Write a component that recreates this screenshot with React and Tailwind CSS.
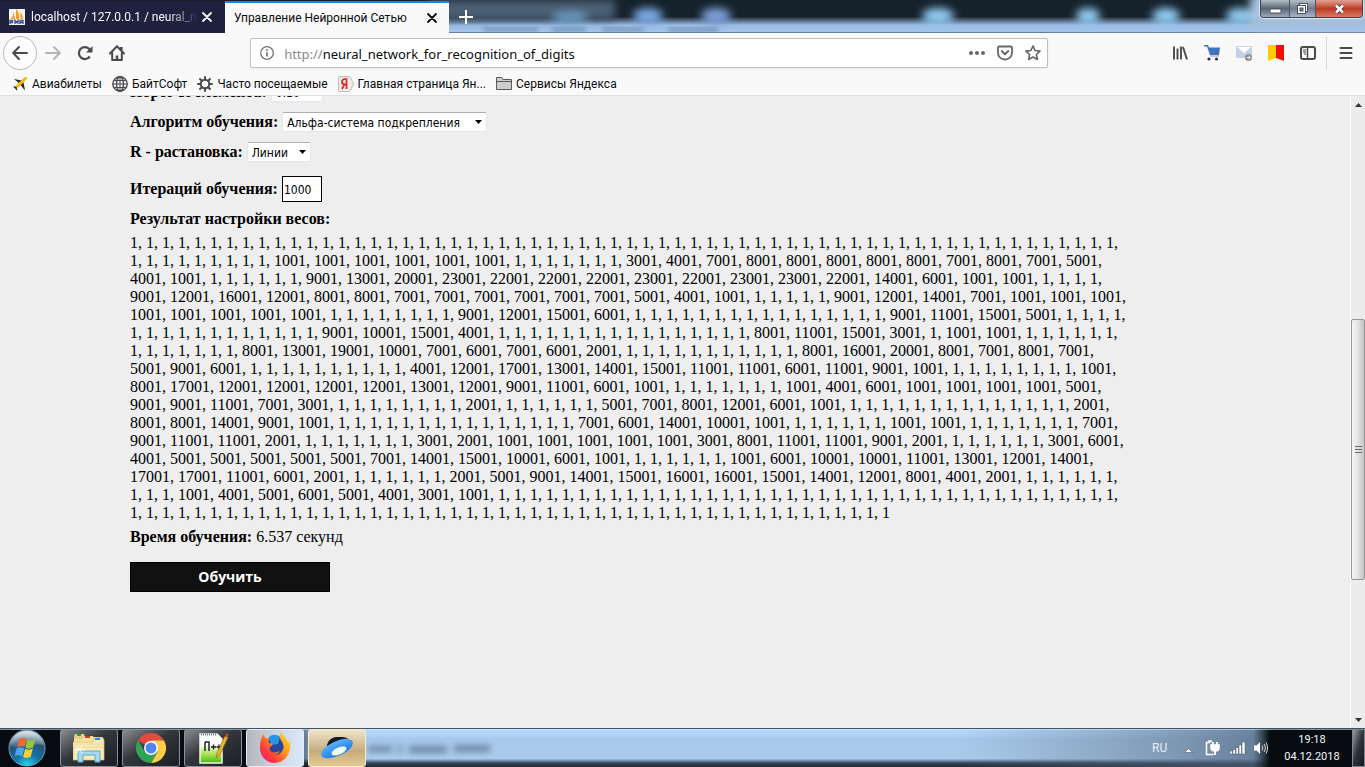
import React from "react";

const ones = (n) => Array(n).fill(1);
const rep = (v, n) => Array(n).fill(v);

const weights = [
  ...ones(62),
  ...ones(9), ...rep(1001, 6), ...ones(7), 3001, 4001, 7001, ...rep(8001, 5), 7001, 8001, 7001, 5001,
  4001, 1001, ...ones(6), 9001, 13001, 20001, 23001, 22001, 22001, 22001, 23001, 22001, 23001, 23001, 22001, 14001, 6001, 1001, 1001, ...ones(4),
  9001, 12001, 16001, 12001, 8001, 8001, ...rep(7001, 6), 5001, 4001, 1001, ...ones(5), 9001, 12001, 14001, 7001, ...rep(1001, 3),
  ...rep(1001, 5), ...ones(8), 9001, 12001, 15001, 6001, ...ones(16), 9001, 11001, 15001, 5001, ...ones(4),
  ...ones(12), 9001, 10001, 15001, 4001, ...ones(16), 8001, 11001, 15001, 3001, 1, 1001, 1001, ...ones(6),
  ...ones(7), 8001, 13001, 19001, 10001, 7001, 6001, 7001, 6001, 2001, ...ones(11), 8001, 16001, 20001, 8001, 7001, 8001, 7001,
  5001, 9001, 6001, ...ones(10), 4001, 12001, 17001, 13001, 14001, 15001, 11001, 11001, 6001, 11001, 9001, 1001, ...ones(8), 1001,
  8001, 17001, ...rep(12001, 4), 13001, 12001, 9001, 11001, 6001, 1001, ...ones(7), 1001, 4001, 6001, ...rep(1001, 4), 5001,
  9001, 9001, 11001, 7001, 3001, ...ones(8), 2001, ...ones(6), 5001, 7001, 8001, 12001, 6001, 1001, ...ones(14), 2001,
  8001, 8001, 14001, 9001, 1001, ...ones(15), 7001, 6001, 14001, 10001, 1001, ...ones(6), 1001, 1001, ...ones(7), 7001,
  9001, 11001, 11001, 2001, ...ones(7), 3001, 2001, ...rep(1001, 5), 3001, 8001, 11001, 11001, 9001, 2001, ...ones(6), 3001, 6001,
  4001, ...rep(5001, 5), 7001, 14001, 15001, 10001, 6001, 1001, ...ones(6), 1001, 6001, 10001, 10001, 11001, 13001, 12001, 14001,
  17001, 17001, 11001, 6001, 2001, ...ones(6), 2001, 5001, 9001, 14001, 15001, 16001, 16001, 15001, 14001, 12001, 8001, 4001, 2001, ...ones(6),
  ...ones(3), 1001, 4001, 5001, 6001, 5001, 4001, 3001, 1001, ...ones(39),
  ...ones(48),
];

function CloseIcon({ className }) {
  return (
    <svg viewBox="0 0 10 10" className={`size-[10px] ${className}`} fill="none" stroke="currentColor" strokeWidth="1.8" strokeLinecap="round">
      <path d="M1 1l8 8M9 1l-8 8" />
    </svg>
  );
}

function TitleBackdrop() {
  return (
    <svg className="absolute inset-0 size-full" viewBox="0 0 1365 33" preserveAspectRatio="none" aria-hidden="true">
      <defs>
        <linearGradient id="glass" x1="0" y1="0" x2="0" y2="1">
          <stop offset="0" stopColor="#15222b" />
          <stop offset=".5" stopColor="#15212b" />
          <stop offset=".76" stopColor="#9bbce4" />
          <stop offset=".96" stopColor="#a2c4ec" />
          <stop offset=".97" stopColor="#64809f" />
          <stop offset="1" stopColor="#64809f" />
        </linearGradient>
        <filter id="soft" x="-30%" y="-60%" width="160%" height="220%"><feGaussianBlur stdDeviation="4" /></filter>
        <filter id="faint" x="-30%" y="-60%" width="160%" height="220%"><feGaussianBlur stdDeviation="2" /></filter>
      </defs>
      <rect width="1365" height="33" fill="url(#glass)" />
      <g filter="url(#soft)">
        <rect x="430" y="0" width="185" height="20" fill="#4b5f73" />
        <ellipse cx="570" cy="18" rx="18" ry="6" fill="#6b9bc4" />
        <ellipse cx="648" cy="16" rx="15" ry="8" fill="#7cabe8" />
        <ellipse cx="716" cy="16" rx="15" ry="8" fill="#7fa3df" />
        <ellipse cx="938" cy="16" rx="16" ry="8" fill="#92cdf5" />
        <ellipse cx="1088" cy="16" rx="12" ry="8" fill="#92cdf5" />
        <ellipse cx="1166" cy="16" rx="14" ry="8" fill="#92cdf5" />
        <ellipse cx="1240" cy="16" rx="14" ry="8" fill="#92cdf5" />
        <rect x="1250" y="-6" width="130" height="34" fill="#a9c3df" />
      </g>
      <g filter="url(#faint)" fill="#6987ab">
        <rect x="484" y="28" width="54" height="3" />
        <rect x="552" y="28" width="34" height="3" />
        <rect x="602" y="28" width="42" height="3" />
        <rect x="668" y="28" width="50" height="3" />
      </g>
    </svg>
  );
}

function WindowControls() {
  return (
    <div className="absolute right-[2px] top-0 flex h-[18px] w-[103px] overflow-hidden rounded-b-[4px] border border-t-0 border-[#39424d] shadow-[0_0_1px_1px_rgba(255,255,255,0.6)]">
      <button aria-label="Свернуть" className="flex w-[29px] items-center justify-center border-r border-[#4b5560] bg-linear-to-b from-[#b5bec8] via-[#5a6674] via-50% to-[#9caabb]">
        <svg width="13" height="12" viewBox="0 0 13 12"><rect x="1" y="6" width="11" height="4" rx="1" fill="#fff" stroke="#4a5260" /></svg>
      </button>
      <button aria-label="Свернуть в окно" className="flex w-[26px] items-center justify-center border-r border-[#4b5560] bg-linear-to-b from-[#b5bec8] via-[#6f7b89] via-50% to-[#a8b8cb]">
        <svg width="13" height="13" viewBox="0 0 13 13">
          <rect x="3.5" y="1.5" width="8" height="8" fill="#fff" stroke="#4a5260" />
          <rect x="1.5" y="3.5" width="8" height="8" fill="#fff" stroke="#4a5260" />
          <rect x="4" y="6" width="3" height="3" fill="#7b8592" stroke="#4a5260" />
        </svg>
      </button>
      <button aria-label="Закрыть" className="flex flex-1 items-center justify-center bg-linear-to-b from-[#e0a193] via-[#bb3a22] via-50% to-[#d9785f]">
        <svg width="13" height="12" viewBox="0 0 13 12" fill="none">
          <path d="M3 2.5l7 7M10 2.5l-7 7" stroke="#513038" strokeWidth="4.4" />
          <path d="M3 2.5l7 7M10 2.5l-7 7" stroke="#fff" strokeWidth="2.6" />
        </svg>
      </button>
    </div>
  );
}

function TitleBar() {
  return (
    <header className="relative h-[33px] shrink-0 overflow-hidden bg-[#15222b]">
      <TitleBackdrop />
      <div className="relative flex h-full pt-px">
        <div className="flex w-[225px] items-center bg-[#20213f] pl-[9px] pr-[13px] text-[#f9f9fa]">
          <svg width="16" height="16" viewBox="0 0 16 16" className="shrink-0" aria-hidden="true">
            <rect width="16" height="16" fill="#f6f3ee" />
            <path d="M1.5 10C4 8.500 4.500 5 4.500 2.500L6 10zM7 10V0c2.500 2.500 3.500 6 3 10zM11.500 10V3c1.500 2 2.500 4.500 2.500 7z" fill="#f59b20" />
            <path d="M1 15v-3.500h2.500v2H1M6 15v-3.500l1.500 2 1.500-2V15M11 15v-3.500h3V15M11 13.500h3" fill="none" stroke="#3c4a86" strokeWidth="1.300" />
          </svg>
          <span className="ml-[6px] min-w-0 flex-1 overflow-hidden whitespace-nowrap [mask-image:linear-gradient(to_right,black_82%,transparent)]">
            localhost / 127.0.0.1 / neural_ne
          </span>
          <button aria-label="Закрыть вкладку" className="ml-1"><CloseIcon className="block" /></button>
        </div>
        <div className="flex w-[224px] items-center border-t-2 border-[#0a84ff] bg-[#f9f9fa] pl-[9px] pr-[12px] text-[#0c0c0d]">
          <span className="flex-1 whitespace-nowrap">Управление Нейронной Сетью</span>
          <button aria-label="Закрыть вкладку"><CloseIcon className="block" /></button>
        </div>
        <button aria-label="Новая вкладка" className="ml-[10px] self-center text-white">
          <svg width="14" height="14" viewBox="0 0 14 14" className="block" stroke="currentColor" strokeWidth="2"><path d="M7 0v14M0 7h14" /></svg>
        </button>
      </div>
      <WindowControls />
    </header>
  );
}

function NavBar() {
  return (
    <nav className="flex h-[40px] shrink-0 items-center pl-[3px] text-[#4a4a4f]">
      <div className="flex w-[127px] shrink-0 items-center">
        <button aria-label="Назад" className="flex size-[34px] shrink-0 items-center justify-center rounded-full border border-[#b9b9bb] bg-[#fdfdfd]">
          <svg width="16" height="16" viewBox="0 0 16 16" fill="none" stroke="currentColor" strokeWidth="2" strokeLinecap="round" strokeLinejoin="round"><path d="M15 8H1.500M7 2L1.200 8 7 14" /></svg>
        </button>
        <button aria-label="Вперёд" className="ml-2 text-[#b5b5b8]">
          <svg width="16" height="16" viewBox="0 0 16 16" className="block" fill="none" stroke="currentColor" strokeWidth="2" strokeLinecap="round" strokeLinejoin="round"><path d="M1 8h13.500M9 2l5.800 6L9 14" /></svg>
        </button>
        <button aria-label="Обновить" className="ml-4">
          <svg width="16" height="16" viewBox="0 0 16 16" className="block" fill="none" stroke="currentColor" strokeWidth="2.200"><path d="M12.800 11.500A6 6 0 1 1 12.500 4.200" /><path d="M15.500 1v6.500H9z" fill="currentColor" stroke="none" /></svg>
        </button>
        <button aria-label="Домой" className="ml-4">
          <svg width="16" height="16" viewBox="0 0 16 16" className="block" fill="none" stroke="currentColor" strokeWidth="2" strokeLinejoin="round" strokeLinecap="round"><path d="M1 8.500L8 1.300l7 7.200" /><path d="M3.200 8v7h9.600V8" /><path d="M8 15V10.500M12.300 2v3" strokeWidth="2.600" strokeLinecap="butt" /></svg>
        </button>
      </div>
      <div className="min-w-0 flex-2" />
      <div className="flex h-[30px] min-w-0 flex-13 items-center rounded-[2px] border border-[#bebebe] bg-white pl-[9px] pr-[6px] shadow-[0_1px_3px_rgba(0,0,0,0.06)]">
        <svg width="14" height="14" viewBox="0 0 14 14" className="shrink-0" fill="none" stroke="#737378" aria-hidden="true"><circle cx="7" cy="7" r="6.300" strokeWidth="1.300" /><path d="M7 6.200V10.500M7 3.300v1.700" strokeWidth="1.700" /></svg>
        <div className="ml-[10px] flex min-w-0 flex-1 items-center pt-px font-['Noto_Sans',sans-serif] text-[13px]">
          <label htmlFor="address" className="text-[#8b8b8f]">http://</label>
          <input id="address" type="text" defaultValue="neural_network_for_recognition_of_digits" className="min-w-0 flex-1 bg-transparent text-[#0c0c0d] outline-none" />
        </div>
        <div className="flex items-center gap-3 text-[#68686c]">
          <button aria-label="Действия на странице"><svg width="16" height="16" viewBox="0 0 16 16" className="block" fill="currentColor"><circle cx="2" cy="8" r="2" /><circle cx="8" cy="8" r="2" /><circle cx="14" cy="8" r="2" /></svg></button>
          <button aria-label="Сохранить в Pocket"><svg width="16" height="16" viewBox="0 0 16 16" className="block" fill="none" stroke="currentColor" strokeWidth="1.800" strokeLinecap="round" strokeLinejoin="round"><path d="M2.300 1.500h11.400c.8 0 1.300.5 1.300 1.300V8a7 6.500 0 0 1-14 0V2.800c0-.8.500-1.300 1.300-1.300z" /><path d="M4.800 6L8 9.200 11.200 6" strokeWidth="2" /></svg></button>
          <button aria-label="Добавить в закладки"><svg width="16" height="16" viewBox="0 0 16 16" className="block" fill="none" stroke="currentColor" strokeWidth="1.700" strokeLinejoin="round"><path d="M8 1l2.100 4.500 4.900.6-3.600 3.400.9 4.900L8 12l-4.300 2.400.9-4.900L1 6.100l4.900-.6z" /></svg></button>
        </div>
      </div>
      <div className="min-w-0 flex-2" />
      <div className="flex w-[197px] shrink-0 items-center gap-4 pl-1 pr-[11px]">
        <button aria-label="Библиотека"><svg width="16" height="16" viewBox="0 0 16 16" className="block" stroke="currentColor" strokeWidth="1.900" fill="none"><path d="M2 1.500v13M5.500 3.500v11M9 1.500v13M11 2l4 12.500" /></svg></button>
        <button aria-label="Корзина"><svg width="16" height="16" viewBox="0 0 16 16" className="block"><path d="M0 0h4l1 2.500h11L15 10H6L3 1.500H0z" fill="#4273bd" /><path d="M6 11h9" stroke="#7d9ccc" /><circle cx="5" cy="14" r="1.600" fill="#30343c" /><circle cx="12.500" cy="14" r="1.600" fill="#30343c" /></svg></button>
        <button aria-label="Почта"><svg width="16" height="16" viewBox="0 0 16 16" className="block"><rect y="1" width="16" height="12" fill="#c5d0ea" /><path d="M1 2h14L8 8z" fill="#fff" /><circle cx="12.500" cy="12.500" r="3.500" fill="#8a8b90" /><path d="M10.800 12.500h3.500M12.500 10.800l1.800 1.700-1.800 1.700" stroke="#fff" fill="none" /></svg></button>
        <button aria-label="Яндекс Закладки"><svg width="16" height="16" viewBox="0 0 16 16" className="block"><path d="M0 0h8v13l-8 3z" fill="#fc0" /><path d="M8 0h8v16l-8-3z" fill="#f20d0d" /></svg></button>
        <button aria-label="Боковая панель"><svg width="16" height="16" viewBox="0 0 16 16" className="block" fill="none" stroke="currentColor"><rect x="1" y="2" width="14" height="12" rx="2" strokeWidth="2" /><path d="M7.500 2v12" strokeWidth="1.500" /><path d="M3 5h3M3 7h3M4 9h2" /></svg></button>
        <span className="ml-[-6px] h-[33px] w-px shrink-0 bg-[#d7d7db]" />
        <button aria-label="Меню" className="ml-[-4px]"><svg width="14" height="14" viewBox="0 0 14 14" className="block" stroke="currentColor" strokeWidth="2" strokeLinecap="round"><path d="M1.500 2h11M1.500 7h11M1.500 12h11" /></svg></button>
      </div>
    </nav>
  );
}

const bookmarkIcons = {
  plane: (
    <svg width="16" height="16" viewBox="0 0 16 16"><path d="M2 3l8 1.500 1.500 2-3 2z" fill="#2b2b2b" /><path d="M13 14.500l-1.500-8-2-1-1.500 3z" fill="#2b2b2b" /><path d="M14.800 1.200c.6.700.2 1.800-.6 2.600L7 11l-3 1.500-1-1L4.500 9 12 1.800c.9-.8 2.100-1.200 2.800-.6z" fill="#f5b916" /><path d="M1.500 10l3 1 1 3.500-1.500-.7-.8-1.400-1.300-.8z" fill="#2b2b2b" /></svg>
  ),
  globe: (
    <svg width="16" height="16" viewBox="0 0 16 16" fill="none" stroke="#4a4a4f" strokeWidth="1.400"><circle cx="8" cy="8" r="7.200" /><ellipse cx="8" cy="8" rx="3.500" ry="7.200" /><path d="M8 1v14M1 8h14M2 4.500h12M2 11.500h12" strokeWidth="1.100" /></svg>
  ),
  gear: (
    <svg width="16" height="16" viewBox="0 0 16 16" fill="none" stroke="#4a4a4f"><circle cx="8" cy="8" r="4.300" strokeWidth="2" /><path d="M8 1v2.500M8 12.500V15M1 8h2.500M12.500 8H15M3 3l2 2M11 11l2 2M13 3l-2 2M5 11l-2 2" strokeWidth="2" strokeLinecap="round" /></svg>
  ),
  yandex: (
    <svg width="16" height="16" viewBox="0 0 16 16"><path d="M1.500.5h9c1 0 1.500.5 2 1.200L15.500 8l-3 6.300c-.5.700-1 1.200-2 1.200h-9a1 1 0 0 1-1-1v-13a1 1 0 0 1 1-1z" fill="#ececec" stroke="#bdbdbd" /><path d="M8.500 13V3H7C5 3 4 4.200 4 5.700S5 8.300 6.500 8.300h2M6.500 8.300L4 13" fill="none" stroke="#e02020" strokeWidth="1.700" /></svg>
  ),
  folder: (
    <svg width="16" height="16" viewBox="0 0 16 16"><path d="M.5 13.500v-12h5l1.500 2h8.500v10z" fill="#cfcfcf" stroke="#58585c" /><path d="M.5 5.500h15" stroke="#58585c" /></svg>
  ),
};

const bookmarks = [
  ["plane", "Авиабилеты"],
  ["globe", "БайтСофт"],
  ["gear", "Часто посещаемые"],
  ["yandex", "Главная страница Ян..."],
  ["folder", "Сервисы Яндекса"],
];

function BookmarksBar() {
  return (
    <div className="flex h-[23px] shrink-0 items-center gap-[10px] border-b border-[#e0e0e1] pl-3 text-[#0c0c0d]">
      {bookmarks.map(([icon, name]) => (
        <a key={name} href="#" className="flex items-center gap-1 whitespace-nowrap">
          {bookmarkIcons[icon]}
          {name}
        </a>
      ))}
    </div>
  );
}

function Picker({ id, value, className }) {
  return (
    <span className={`relative flex h-5 items-center ${className}`}>
      <select id={id} defaultValue={value} className="size-full appearance-none rounded-[2px] border border-[#e3e6ec] border-t-[#abadb3] bg-white pl-1 pt-px font-['DejaVu_Sans_Condensed','DejaVu_Sans',sans-serif] text-[12px] text-black outline-none">
        <option>{value}</option>
      </select>
      <svg width="7" height="4" viewBox="0 0 7 4" className="pointer-events-none absolute right-[5px]" aria-hidden="true"><path d="M0 0h7L3.500 4z" /></svg>
    </span>
  );
}

const fieldClass = "flex h-[30px] items-center gap-1";

function Page() {
  return (
    <main className="min-w-0 flex-1 overflow-hidden bg-[#eeeeee] pl-[130px] font-['Liberation_Serif',serif] text-[16px] leading-[18px] text-black">
      <form className="mt-[-19px] max-w-[1000px]" onSubmit={(e) => e.preventDefault()}>
        <div className={fieldClass}>
          <label htmlFor="threshold" className="font-bold">Порог R-элемента:</label>
          <input id="threshold" defaultValue="0.10" className="h-5 w-[52px] rounded-[2px] border border-[#e3e6ec] bg-white px-1 pt-[2px] font-['DejaVu_Sans_Condensed','DejaVu_Sans',sans-serif] text-[12px] outline-none" />
        </div>
        <div className={fieldClass}>
          <label htmlFor="algorithm" className="font-bold">Алгоритм обучения:</label>
          <Picker id="algorithm" value="Альфа-система подкрепления" className="w-[205px]" />
        </div>
        <div className={fieldClass}>
          <label htmlFor="layout" className="font-bold">R - растановка:</label>
          <Picker id="layout" value="Линии" className="w-[64px]" />
        </div>
        <div className={`${fieldClass} mt-[7px]`}>
          <label htmlFor="iterations" className="font-bold">Итераций обучения:</label>
          <input id="iterations" defaultValue="1000" className="h-[26px] w-10 border border-black bg-white px-px pt-[2px] font-['DejaVu_Sans_Condensed','DejaVu_Sans',sans-serif] text-[12px] outline-none" />
        </div>
        <h2 className={`${fieldClass} font-bold`}>Результат настройки весов:</h2>
        <p>{weights.join(", ")}</p>
        <p className={fieldClass}><b>Время обучения:</b> 6.537 секунд</p>
        <button type="submit" className="mt-[10px] block h-[30px] w-[200px] border border-black bg-[#111111] font-['Open_Sans',sans-serif] text-[14px] font-bold text-white">
          Обучить
        </button>
      </form>
    </main>
  );
}

function Scrollbar() {
  return (
    <div className="flex w-[15px] shrink-0 flex-col items-center border-l border-white bg-[#ececec]" aria-hidden="true">
      <svg width="7" height="17" viewBox="0 0 7 17"><path d="M0 11l3.500-4L7 11z" fill="#333" /></svg>
      <div className="flex-207" />
      <div className="flex w-full flex-260 items-center justify-center rounded-[2px] border border-[#979797] bg-linear-to-r from-[#f5f5f5] via-[#e2e2e4] to-[#c3c4c8]">
        <svg width="7" height="8" viewBox="0 0 7 8" stroke="#66686d"><path d="M0 .5h7M0 3.500h7M0 6.500h7" /></svg>
      </div>
      <div className="flex-131" />
      <svg width="7" height="17" viewBox="0 0 7 17"><path d="M0 7l3.500 4L7 7z" fill="#333" /></svg>
    </div>
  );
}

const darkTask = "border-[#8d9296] bg-linear-to-br from-[#8a8d90] via-[#33373b] via-45% to-[#1b1f23]";
const lightTask = "border-[#e5edf5] bg-linear-to-r from-[#b4b6b9] via-[#cdd3dc] to-[#dbe9fb]";
const goldTask = "border-[#f6ecd2] bg-linear-to-b from-[#efe5c8] via-[#c4ab7d] via-60% to-[#e6cc91]";

const tasks = [
  ["Проводник", darkTask, (
    <svg width="32" height="30" viewBox="0 0 32 30">
      <path d="M1 4l1-3h9l1 3h18v20H1z" fill="#e6cf83" />
      <path d="M10 6l1-3h9l1 3h9v4H1V6z" fill="#f3e3a3" />
      <path d="M20 7l1-2h9l1 2v20H0V9h20z" fill="#f8ebb3" stroke="#d7bf73" strokeWidth=".7" />
      <path d="M4 2h4" stroke="#12b321" strokeWidth="2" /><path d="M12 4h5" stroke="#d63a20" strokeWidth="2" /><path d="M22 6h5" stroke="#3386dd" strokeWidth="2" />
      <path d="M1 11h30M1 14h30" stroke="#ead995" />
      <path d="M5 29V18h22v11h-5v-7H10v7z" fill="#a7d8ef" stroke="#5fa8cf" />
      <path d="M4 20l5-7M4 13l5 7M2 17h10" stroke="#fff" strokeWidth=".8" />
    </svg>
  )],
  ["Google Chrome", darkTask, (
    <svg width="30" height="30" viewBox="0 0 30 30">
      <path d="M15 15L2 7.500A15 15 0 0 1 28 7.500z" fill="#e04a3f" />
      <path d="M28 7.500A15 15 0 0 1 15 30l6.500-11.200L15 7.500z" fill="#fccd45" />
      <path d="M2 7.500A15 15 0 0 0 15 30l6.500-11.200L9 19z" fill="#2fa356" />
      <circle cx="15" cy="15" r="7" fill="#fff" /><circle cx="15" cy="15" r="5.500" fill="#4d86ee" />
    </svg>
  )],
  ["Notepad++", darkTask, (
    <svg width="32" height="32" viewBox="0 0 32 32">
      <defs><linearGradient id="npp" x1="0" y1="0" x2="0" y2="1"><stop offset=".35" stopColor="#fff" /><stop offset=".7" stopColor="#a8e24f" /><stop offset="1" stopColor="#46b912" /></linearGradient></defs>
      <path d="M3 2h17l5 5v24H3z" fill="url(#npp)" stroke="#f3f3f3" strokeWidth="1.500" />
      <path d="M4 2.500h16" stroke="#777" strokeDasharray="1 1" strokeWidth="2" />
      <path d="M8 19v-9M8 10h4v9" fill="none" stroke="#222" strokeWidth="1.500" />
      <path d="M14 15h5M16.500 12.500v5M19.500 15h5M22 12.500v5" stroke="#222" strokeWidth="1.300" />
      <path d="M19 26l1-5 8-17 3 1.500-8 17z" fill="#e9b434" stroke="#96661a" strokeWidth=".7" /><path d="M28 4l1-3 3 1.500-1 3z" fill="#b23b3b" />
    </svg>
  )],
  ["Firefox", lightTask, (
    <svg width="32" height="32" viewBox="0 0 32 32">
      <defs><linearGradient id="fox" x1="1" y1="0" x2="0" y2="1"><stop offset="0" stopColor="#ffe226" /><stop offset=".4" stopColor="#ff9a1a" /><stop offset=".7" stopColor="#ff3b3b" /><stop offset="1" stopColor="#e31587" /></linearGradient></defs>
      <circle cx="16" cy="15" r="11" fill="#28479c" />
      <path d="M10 5c3-3 8-3 11 0l-2 7-7 1z" fill="#2595e8" />
      <path d="M5 2c0 2 .5 3 1.500 4C8 6 9.500 6 11 6.500 9.500 8 9 9.500 10 11l4 1c-1 2-3 2.500-3.500 4 0 3.500 3 5 5.500 4.500 2-.3 3-1.500 4.500-1-1 2.500-3.500 3.500-6 3.500 6 1 10.500-4 10-9-.3-3-2-5-3-6.500-1-2.500-.8-5 .5-7.500 1 4 6 6.500 7.500 11l1.500-2c2 12-5 22-15.500 22C7 31 1 24 1 16 1 10 2 5 5 2z" fill="url(#fox)" />
    </svg>
  )],
  ["Яндекс.Диск", goldTask, (
    <svg width="34" height="24" viewBox="0 0 34 24">
      <defs><linearGradient id="disk" x1="0" y1="0" x2="0" y2="1"><stop offset="0" stopColor="#5fb0f5" /><stop offset="1" stopColor="#157be8" /></linearGradient></defs>
      <path d="M7 11C9 3 13 1 19 1l9 1-16 12z" fill="#141a28" />
      <ellipse cx="17" cy="12.500" rx="17" ry="7.500" transform="rotate(-24 17 12.500)" fill="url(#disk)" />
      <path d="M7 9C9 2 14 1 19 1c3 0 5 0 7 1-7 1-13 4-19 8z" fill="#141a28" />
      <ellipse cx="19" cy="15" rx="8" ry="3.500" transform="rotate(-24 19 15)" fill="#f2fbff" />
    </svg>
  )],
];

function StartOrb() {
  return (
    <svg width="40" height="38" viewBox="0 0 40 38" className="block">
      <defs>
        <radialGradient id="orb" cx=".5" cy="1" r="1"><stop offset="0" stopColor="#2bd9f7" /><stop offset=".35" stopColor="#1573a8" /><stop offset=".7" stopColor="#274f71" /><stop offset="1" stopColor="#9fb5c6" /></radialGradient>
        <linearGradient id="shine" x1="0" y1="0" x2="0" y2="1"><stop offset="0" stopColor="#fff" stopOpacity=".7" /><stop offset="1" stopColor="#fff" stopOpacity=".1" /></linearGradient>
      </defs>
      <circle cx="20" cy="19" r="18" fill="url(#orb)" stroke="#6fa0bd" />
      <path d="M3 17C4 7 12 2 20 2s16 5 17 15c-8-5-24 4-34 0z" fill="url(#shine)" />
      <path d="M12 10c3-2 5-1.500 7.500-.2L17.500 18c-2.500-1.300-5-1.500-7.500 0z" fill="#ef6a2d" />
      <path d="M20.500 10.500c2.500 1.200 5 1.300 8-.3L26 18.500c-2.500 1.500-5 1.500-7.500.2z" fill="#93c83e" />
      <path d="M9.700 19.200c2.500-1.500 5-1.300 7.500 0l-2 8c-2.500-1.200-5-1.300-7.500.2z" fill="#4fa6e8" />
      <path d="M18.200 19.800c2.500 1.200 5 1.200 7.700-.3l-2.300 8.200c-2.500 1.500-5 1.400-7.500.2z" fill="#fdd034" />
    </svg>
  );
}

function Taskbar() {
  return (
    <footer className="relative flex h-[39px] shrink-0 items-center overflow-hidden border-t border-[#3f5163] bg-[#0c1217] text-[#f4f7fa]">
      <svg className="absolute inset-0 size-full" viewBox="0 0 1365 38" preserveAspectRatio="none" aria-hidden="true">
        <defs>
          <linearGradient id="bar" x1="0" y1="0" x2="0" y2="1">
            <stop offset="0" stopColor="#b4d8fd" /><stop offset=".15" stopColor="#b0d3f8" /><stop offset=".25" stopColor="#a8c9ea" /><stop offset=".78" stopColor="#aaccec" />
            <stop offset=".83" stopColor="#7390ae" /><stop offset=".9" stopColor="#334352" /><stop offset="1" stopColor="#202b36" />
          </linearGradient>
          <linearGradient id="edge" x1="0" x2="1"><stop offset="0" stopColor="#080c10" /><stop offset=".2" stopColor="#080c10" /><stop offset=".24" stopColor="#080c10" stopOpacity="0" /><stop offset=".7" stopColor="#5d7189" stopOpacity="0" /><stop offset=".86" stopColor="#54677e" stopOpacity=".5" /><stop offset=".918" stopColor="#4c6078" stopOpacity=".7" /><stop offset=".93" stopColor="#080c10" /><stop offset="1" stopColor="#080c10" /></linearGradient>
          <filter id="text-blur" x="-20%" y="-100%" width="140%" height="300%"><feGaussianBlur stdDeviation="3" /></filter>
        </defs>
        <rect width="1365" height="38" fill="url(#bar)" />
        <rect width="1365" height="38" fill="url(#edge)" />
        <g filter="url(#text-blur)" fill="#6c87a5"><rect x="368" y="17" width="24" height="6" /><rect x="398" y="16" width="4" height="8" /><rect x="409" y="17" width="38" height="7" /><rect x="454" y="16" width="36" height="7" /></g>
        <path d="M0 .5h1365" stroke="#dcecff" strokeOpacity=".6" />
      </svg>
      <button aria-label="Пуск" className="relative ml-[7px]"><StartOrb /></button>
      <div className="relative ml-[13px] flex h-full gap-1">
        {tasks.map(([name, look, icon]) => (
          <button key={name} aria-label={name} className={`flex w-[58px] items-center justify-center rounded-[3px] border ${look}`}>{icon}</button>
        ))}
      </div>
      <div className="relative ml-auto flex h-full items-center">
        <span className="w-[32px] text-[12px] text-[#e6edf5]">RU</span>
        <svg width="9" height="5" viewBox="0 0 9 5" className="mr-[12px] mt-1" aria-hidden="true"><path d="M.5 4.500l4-4 4 4z" fill="#fff" stroke="#4a5a6c" strokeWidth=".6" /></svg>
        <svg width="16" height="16" viewBox="0 0 16 16" className="mr-[9px]" fill="none" stroke="#fff" strokeWidth="1.500" aria-hidden="true"><path d="M6 2.500V1H4v1.500H1.500v12h7" /><path d="M6 5h8v3c0 2-1.500 3-4 3s-4-1-4-3z" fill="#fff" /><path d="M8 5V2M12 5V2M10 11v4" strokeWidth="1.800" /></svg>
        <svg width="16" height="14" viewBox="0 0 16 14" className="mr-2" fill="#fff" stroke="#445468" strokeWidth=".5" aria-hidden="true"><rect y="10" width="2.500" height="3" /><rect x="3" y="8.500" width="2.500" height="4.500" /><rect x="6" y="6.500" width="2.500" height="6.500" /><rect x="9" y="4" width="2.500" height="9" /><rect x="12" y="1" width="3" height="12" /></svg>
        <svg width="14" height="14" viewBox="0 0 14 14" className="mr-1" aria-hidden="true"><path d="M0 4.500h2.500L6 1v12L2.500 9.500H0z" fill="#fff" /><path d="M8 4.500c1 1.500 1 3.500 0 5M10 3c1.800 2.500 1.800 5.500 0 8M12 1.500c2 3.500 2 7.500 0 11" fill="none" stroke="#dfe5ea" /></svg>
        <time className="w-[80px] text-center text-[11px] leading-[17px]">19:18<br />04.12.2018</time>
        <button aria-label="Свернуть все окна" className="h-full w-[13px] border border-[#7e868c] bg-linear-to-br from-[#9ba1a5] via-[#2d3338] via-50% to-[#14191d]" />
      </div>
    </footer>
  );
}

export default function App() {
  return (
    <div className="flex h-screen flex-col overflow-hidden bg-[#f9f9fa] font-['Roboto','Noto_Sans',sans-serif] text-[12px] leading-[16px]">
      <TitleBar />
      <NavBar />
      <BookmarksBar />
      <div className="flex min-h-0 flex-1">
        <Page />
        <Scrollbar />
      </div>
      <Taskbar />
    </div>
  );
}
